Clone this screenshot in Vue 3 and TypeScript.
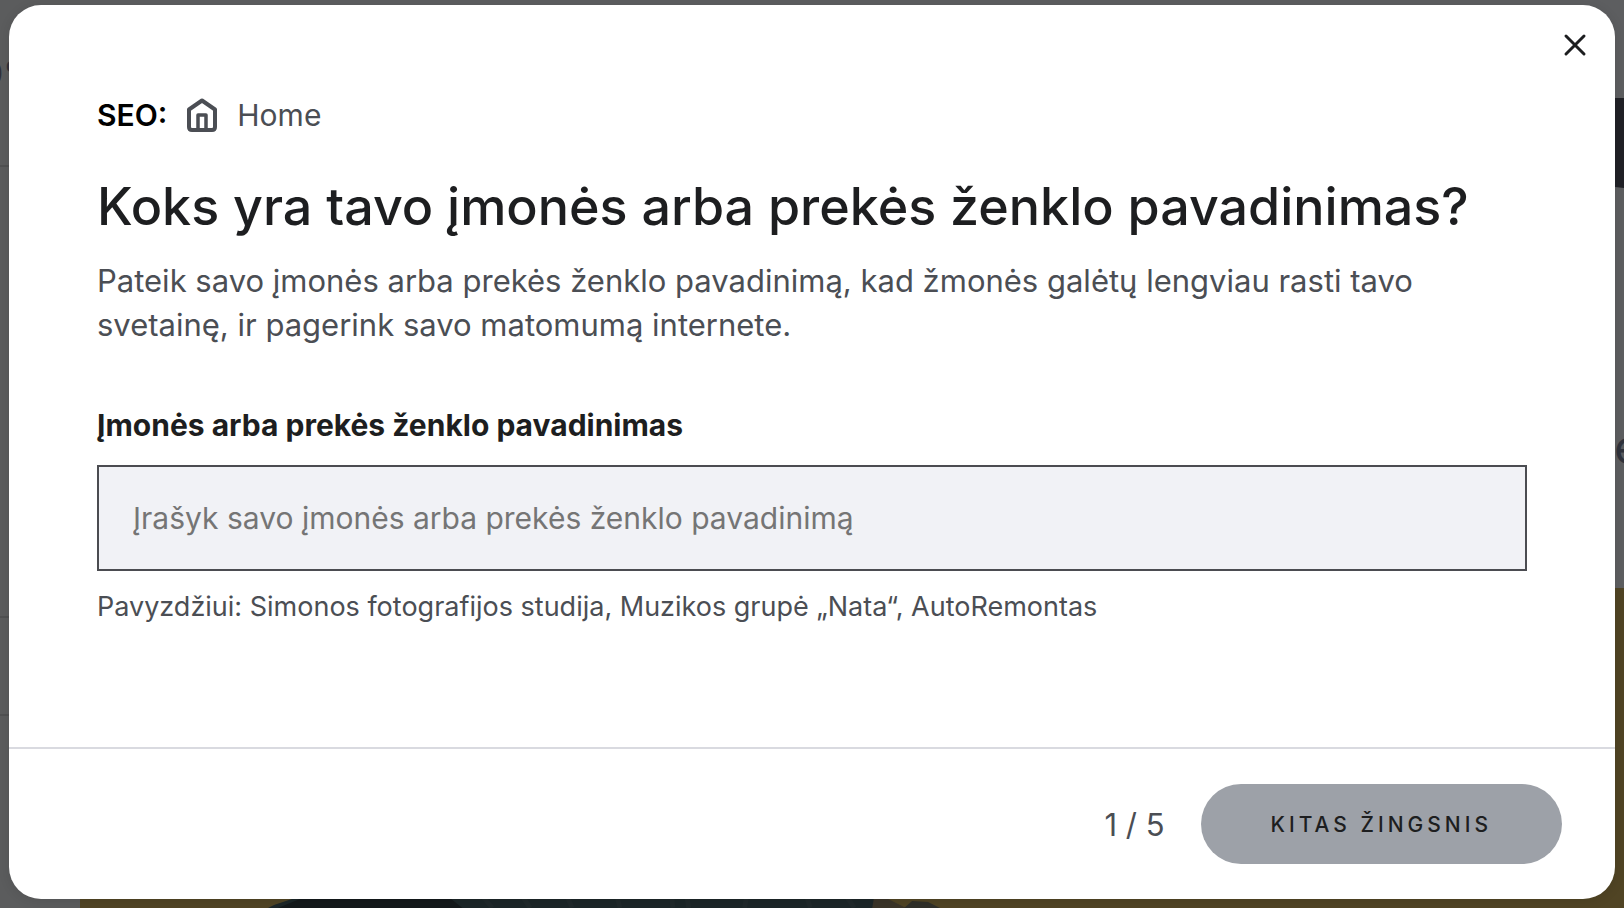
<script setup lang="ts">
import { computed, ref } from 'vue'

const businessName = ref('')
const step = ref(1)
const totalSteps = 5
const open = ref(true)
const canContinue = computed(() => businessName.value.trim().length > 0)

function next(): void {
  if (canContinue.value && step.value < totalSteps) step.value += 1
}
</script>

<template>
  <div class="screen">
    <div class="page" aria-hidden="true">
      <div class="sidebar">
        <div class="score">0%</div>
        <div class="side-row"></div>
        <div class="side-row short"></div>
      </div>
      <div class="canvas">
        <div class="dark-tab"></div>
        <div class="letter">e</div>
        <div class="hero">
          <svg class="hair" viewBox="0 0 680 12" preserveAspectRatio="none">
            <path d="M0 12 L6 9 L24 3 L40 0 H600 L612 5 L618 12 Z" fill="#1c2628" />
            <path d="M10 12 L32 3 L60 0 H180 L195 12 Z" fill="#14191b" />
            <path d="M608 0 L622 3 L640 12 H606 Z" fill="#3a3428" />
            <path d="M638 12 L646 5 L662 6 L674 12 Z" fill="#2f2f29" />
            <path d="M215 0 l10 12 M255 0 l8 12 M300 0 l5 12 M350 0 l3 12 M405 0 l1 12 M420 0 l2 12 M480 0 l-2 12 M540 0 l4 12 M580 0 l8 12" stroke="#20292b" stroke-width="5" fill="none" />
          </svg>
        </div>
      </div>
    </div>

    <div class="overlay">
      <section v-if="open" class="modal" role="dialog" aria-modal="true" aria-labelledby="step-title">
        <button class="close" type="button" aria-label="Uždaryti" @click="open = false">
          <svg viewBox="0 0 24 24" width="24" height="24">
            <path d="M3 3 L21 21 M21 3 L3 21" fill="none" stroke="#1d1e20" stroke-width="3" stroke-linecap="round" />
          </svg>
        </button>

        <div class="content">
          <div class="crumb">
            <strong>SEO:</strong>
            <svg viewBox="0 0 30 34" width="30" height="34" fill="none" stroke="#4b4e54" stroke-width="4" stroke-linejoin="round">
              <path d="M2 11.5 L15 2.5 L28 11.5 V29 Q28 32 25 32 H5 Q2 32 2 29 Z" />
              <path d="M11 32 V17 H19 V32" stroke-width="3.5" />
            </svg>
            <span>Home</span>
          </div>
          <h1 id="step-title">Koks yra tavo įmonės arba prekės ženklo pavadinimas?</h1>
          <p class="lead">Pateik savo įmonės arba prekės ženklo pavadinimą, kad žmonės galėtų lengviau rasti tavo svetainę, ir pagerink savo matomumą internete.</p>
          <label for="business-name">Įmonės arba prekės ženklo pavadinimas</label>
          <input
            id="business-name"
            v-model="businessName"
            type="text"
            placeholder="Įrašyk savo įmonės arba prekės ženklo pavadinimą"
            aria-describedby="name-hint"
          />
          <p id="name-hint" class="hint">Pavyzdžiui: Simonos fotografijos studija, Muzikos grupė „Nata“, AutoRemontas</p>
        </div>

        <footer>
          <span class="counter">{{ step }} / {{ totalSteps }}</span>
          <button class="next" type="button" :disabled="!canContinue" @click="next">KITAS ŽINGSNIS</button>
        </footer>
      </section>
    </div>
  </div>
</template>

<style>
body {
  margin: 0;
}
</style>

<style scoped>
* {
  box-sizing: border-box;
}

.screen {
  position: relative;
  min-height: 100vh;
  display: flex;
  overflow: hidden;
  font-family: Inter, "Open Sans", "Liberation Sans", sans-serif;
  color: #4b4e54;
}

.page {
  position: absolute;
  inset: 0;
  display: flex;
  background: #5d5e60;
}

.sidebar {
  width: 80px;
  background: #5b5c5d;
}

.score {
  height: 167px;
  padding-top: 50px;
  border-bottom: 2px solid #505152;
  font-size: 32px;
  line-height: 48px;
  text-indent: -17px;
  color: #30313a;
}

.side-row {
  height: 451px;
  border-bottom: 2px solid #505152;
}

.side-row.short {
  height: 98px;
}

.canvas {
  flex: 1;
  display: flex;
  flex-direction: column;
  align-items: flex-end;
  padding-top: 98px;
}

.dark-tab {
  width: 40px;
  height: 90px;
  border-radius: 0 0 0 46px;
  background: #202126;
}

.letter {
  height: 400px;
  padding-top: 231px;
  margin-right: -18px;
  font-size: 48px;
  line-height: 56px;
  color: #30333c;
}

.hero {
  flex: 1;
  align-self: stretch;
  display: flex;
  align-items: flex-end;
  padding-left: 188px;
  background: #504424;
}

.hair {
  width: 50%;
  height: 12px;
}

.overlay {
  position: relative;
  flex: 1;
  display: flex;
  padding: 5px 9px 9px;
}

.modal {
  position: relative;
  flex: 1;
  min-width: 0;
  display: flex;
  flex-direction: column;
  border-radius: 32px;
  background: #fff;
  box-shadow: 0 2px 12px rgba(0, 0, 0, 0.1);
}

.close {
  position: absolute;
  top: 20px;
  right: 20px;
  display: flex;
  padding: 8px;
  border: 0;
  background: none;
  cursor: pointer;
}

.content {
  flex: 1;
  padding: 88px 88px 48px;
}

.crumb {
  display: flex;
  align-items: center;
  gap: 20px;
  height: 44px;
  font-size: 30px;
}

.crumb strong {
  font-weight: 600;
  color: #000;
}

h1 {
  margin: 38px 0 20px;
  font-size: 52px;
  line-height: 64px;
  font-weight: 500;
  color: #1d1e20;
}

.lead {
  margin: 0 0 58px;
  font-size: 31px;
  line-height: 44px;
}

label {
  display: block;
  margin-bottom: 20px;
  font-size: 30px;
  line-height: 40px;
  font-weight: 700;
  color: #1d1e20;
}

input {
  display: block;
  width: 100%;
  height: 106px;
  padding: 0 34px;
  border: 2px solid #4b4c51;
  border-radius: 0;
  background: #f1f2f6;
  font: inherit;
  font-size: 30px;
  color: #1d1e20;
}

input::placeholder {
  color: #757575;
  opacity: 1;
}

.hint {
  margin: 16px 0 0;
  font-size: 27px;
  line-height: 40px;
}

footer {
  display: flex;
  align-items: center;
  justify-content: flex-end;
  gap: 36px;
  padding: 35px 53px;
  border-top: 2px solid #d9dae0;
}

.counter {
  font-size: 31px;
}

.next {
  height: 80px;
  padding: 0 70px;
  border: 0;
  border-radius: 40px;
  background: #9da1a8;
  font: inherit;
  font-size: 21px;
  font-weight: 500;
  letter-spacing: 4px;
  color: #1d1e20;
}
</style>
